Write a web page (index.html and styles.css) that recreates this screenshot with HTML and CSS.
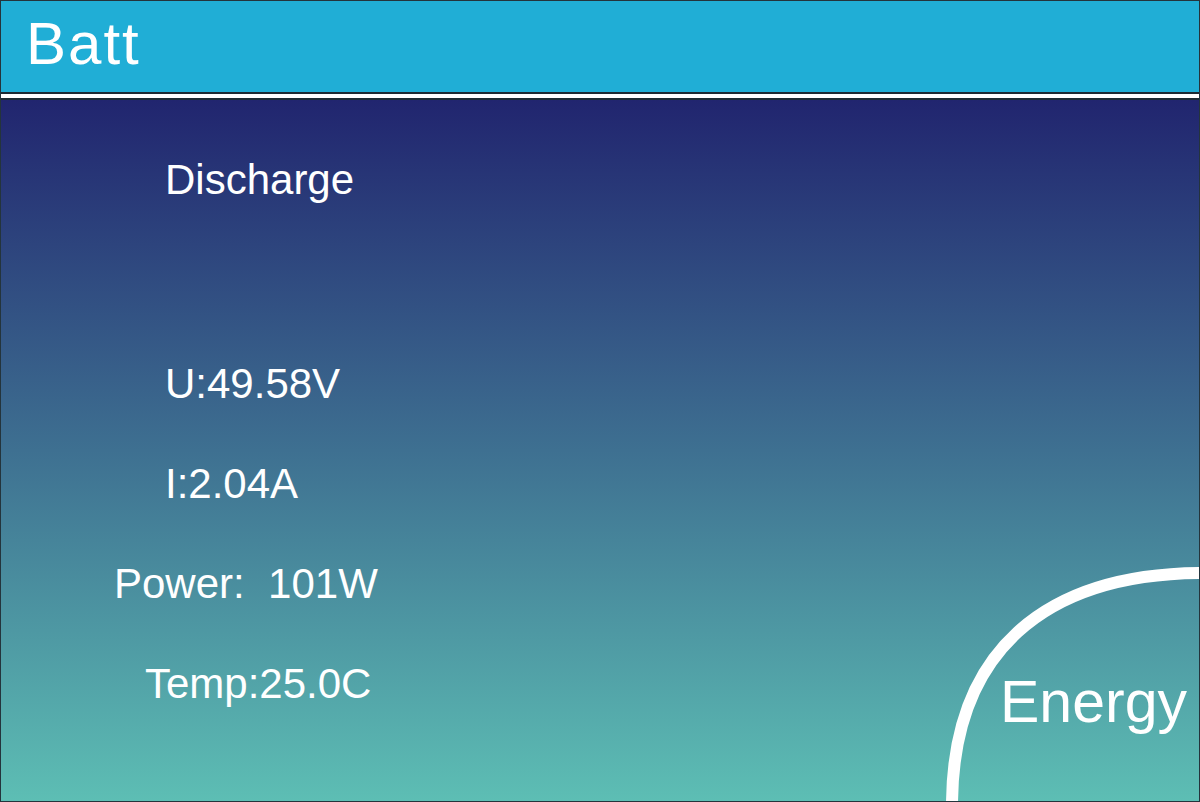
FILE: index.html
```html
<!DOCTYPE html>
<html lang="en">
<head>
  <meta charset="UTF-8">
  <meta name="viewport" content="width=device-width, initial-scale=1">
  <title>Batt</title>
  <link rel="stylesheet" href="styles.css">
</head>
<body>

  <div class="screen">

    <!-- TITLE BAR -->
    <div class="title-bar">Batt</div>
    <div class="title-rule"></div>

    <!-- BATTERY READINGS -->
    <div class="panel">
      <div class="reading state">Discharge</div>
      <div class="reading">U:49.58V</div>
      <div class="reading">I:2.04A</div>
      <div class="reading power">Power:&nbsp; 101W</div>
      <div class="reading temp">Temp:25.0C</div>

      <!-- corner button -->
      <div class="energy">
        <svg class="energy-arc" width="260" height="240" viewBox="0 0 260 240">
          <path d="M13 245 C13 92, 104 12, 265 12" fill="none" stroke="#fff" stroke-width="12"/>
        </svg>
        <span class="energy-label">Energy</span>
      </div>
    </div>

  </div>

</body>
</html>
```

FILE: styles.css
```css
body {
  margin: 0;
  font-family: "Liberation Sans", Arial, sans-serif;
  color: #fff;
  background: #fff;
}
.screen {
  width: 1200px;
  height: 802px;
  box-sizing: border-box;
  border: 1px solid #24343c;
  display: flex;
  flex-direction: column;
  overflow: hidden;
}
.title-bar {
  height: 78px;
  padding: 13px 0 0 25px;
  font-size: 60px;
  line-height: 60px;
  letter-spacing: 2px;
  background: #20aed6;
  border-bottom: 2px solid #1d2a33;
}
.title-rule {
  height: 4px;
  background: #fff;
  border-bottom: 2px solid #1d2a33;
}
.panel {
  flex: 1;
  position: relative;
  padding-top: 30px;
  background: linear-gradient(to bottom, #21256f 0%, #3e7091 50%, #5dbeb4 100%);
}
.reading {
  font-size: 42px;
  line-height: 100px;
  padding-left: 164px;
  white-space: nowrap;
}
.state { margin-bottom: 104px; }
.power { padding-left: 113px; }
.temp { padding-left: 144px; }

.energy {
  position: absolute;
  right: 0;
  bottom: 0;
  width: 260px;
  height: 240px;
}
.energy-arc {
  display: block;
}
.energy-label {
  position: absolute;
  left: 61px;
  top: 112px;
  font-size: 59px;
  line-height: 59px;
}
```
